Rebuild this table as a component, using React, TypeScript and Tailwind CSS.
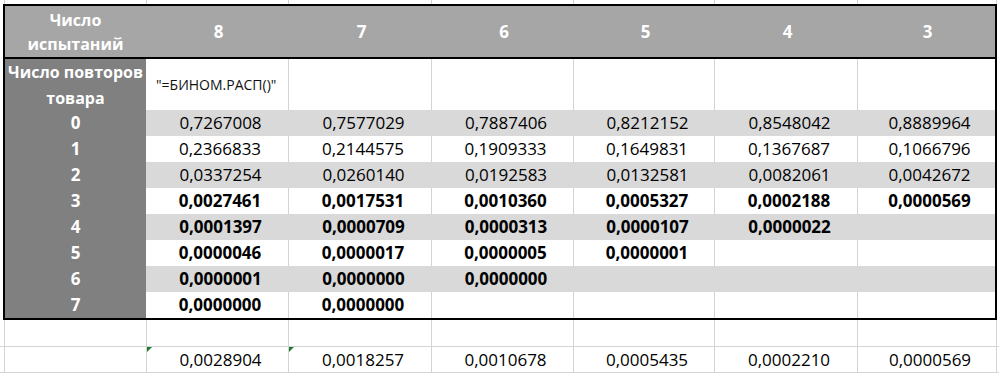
import React from "react";

const W = ["w-[143px]", "w-[143px]", "w-[142px]", "w-[141px]", "w-[143px]", "w-[137px]"];
const OW = ["w-[142px]", "w-[142px]", "w-[143px]", "w-[142px]", "w-[141px]", "w-[143px]", "w-[139px]"];

const rows: { label: string; vals: string[]; bold: boolean }[] = [
  { label: "0", vals: ["0,7267008", "0,7577029", "0,7887406", "0,8212152", "0,8548042", "0,8889964"], bold: false },
  { label: "1", vals: ["0,2366833", "0,2144575", "0,1909333", "0,1649831", "0,1367687", "0,1066796"], bold: false },
  { label: "2", vals: ["0,0337254", "0,0260140", "0,0192583", "0,0132581", "0,0082061", "0,0042672"], bold: false },
  { label: "3", vals: ["0,0027461", "0,0017531", "0,0010360", "0,0005327", "0,0002188", "0,0000569"], bold: true },
  { label: "4", vals: ["0,0001397", "0,0000709", "0,0000313", "0,0000107", "0,0000022", ""], bold: true },
  { label: "5", vals: ["0,0000046", "0,0000017", "0,0000005", "0,0000001", "", ""], bold: true },
  { label: "6", vals: ["0,0000001", "0,0000000", "0,0000000", "", "", ""], bold: true },
  { label: "7", vals: ["0,0000000", "0,0000000", "", "", "", ""], bold: true },
];

const bottom = ["0,0028904", "0,0018257", "0,0010678", "0,0005435", "0,0002210", "0,0000569"];

function OutsideRow({ h, vals, tri }: { h: string; vals?: string[]; tri?: boolean }) {
  return (
    <div className={`flex ${h} border-b border-[#d4d4d4]`}>
      <div className="w-[5px] shrink-0 border-r border-[#d4d4d4]" />
      {OW.map((w, i) => (
        <div
          key={i}
          className={`${w} relative shrink-0 border-r border-[#d4d4d4] flex items-center justify-center text-[17px] text-black`}
        >
          {tri && (i === 1 || i === 2) && (
            <div className="absolute left-0 top-0 w-0 h-0 border-t-[5px] border-t-[#1f7a2e] border-r-[5px] border-r-transparent" />
          )}
          {vals && i > 0 ? <span className="pl-[6px]">{vals[i - 1]}</span> : null}
        </div>
      ))}
    </div>
  );
}

export default function App() {
  return (
    <div className="w-[999px] h-[373px] bg-white overflow-hidden font-['Open_Sans',sans-serif]">
      <div className="flex h-[4px]">
        <div className="w-[5px] shrink-0 border-r border-[#d4d4d4]" />
        {OW.map((w, i) => (
          <div key={i} className={`${w} shrink-0 border-r border-[#d4d4d4]`} />
        ))}
      </div>
      <div className="flex">
        <div className="w-[3px] shrink-0" />
        <div className="w-[994px] border-2 border-black">
          <div className="flex h-[51px] bg-[#a6a6a6] text-white font-bold">
            <div className="w-[141px] shrink-0 flex flex-col items-center justify-center text-[16px] leading-[24px]">
              <span>Число</span>
              <span>испытаний</span>
            </div>
            {["8", "7", "6", "5", "4", "3"].map((n, i) => (
              <div key={i} className={`${W[i]} shrink-0 flex items-center justify-center text-[17px] pl-[2px]`}>
                {n}
              </div>
            ))}
          </div>
          <div className="h-[2px] bg-black" />
          <div className="flex h-[51px]">
            <div className="w-[141px] shrink-0 bg-[#808080] text-white font-bold flex flex-col items-center justify-center text-[16px] leading-[26px]">
              <span className="whitespace-nowrap">Число повторов</span>
              <span>товара</span>
            </div>
            {W.map((w, i) => (
              <div
                key={i}
                className={`${w} shrink-0 ${i < 5 ? "border-r border-[#d4d4d4]" : ""} flex items-center text-[14px] text-[#111] pl-[10px]`}
              >
                {i === 0 ? '"=БИНОМ.РАСП()"' : ""}
              </div>
            ))}
          </div>
          {rows.map((r, ri) => {
            const gray = ri % 2 === 0;
            return (
              <div key={ri} className="flex h-[26px]">
                <div className="w-[141px] shrink-0 bg-[#808080] text-white font-bold flex items-center justify-center text-[17px]">
                  {r.label}
                </div>
                {W.map((w, i) => (
                  <div
                    key={i}
                    className={`${w} shrink-0 ${gray ? "bg-[#d9d9d9]" : i < 5 ? "border-r border-[#d4d4d4]" : ""} flex items-center justify-center text-[17px] text-black pl-[6px] ${r.bold ? "font-bold" : ""}`}
                  >
                    {r.vals[i]}
                  </div>
                ))}
              </div>
            );
          })}
        </div>
      </div>
      <OutsideRow h="h-[27px]" />
      <OutsideRow h="h-[26px]" vals={bottom} tri />
    </div>
  );
}
